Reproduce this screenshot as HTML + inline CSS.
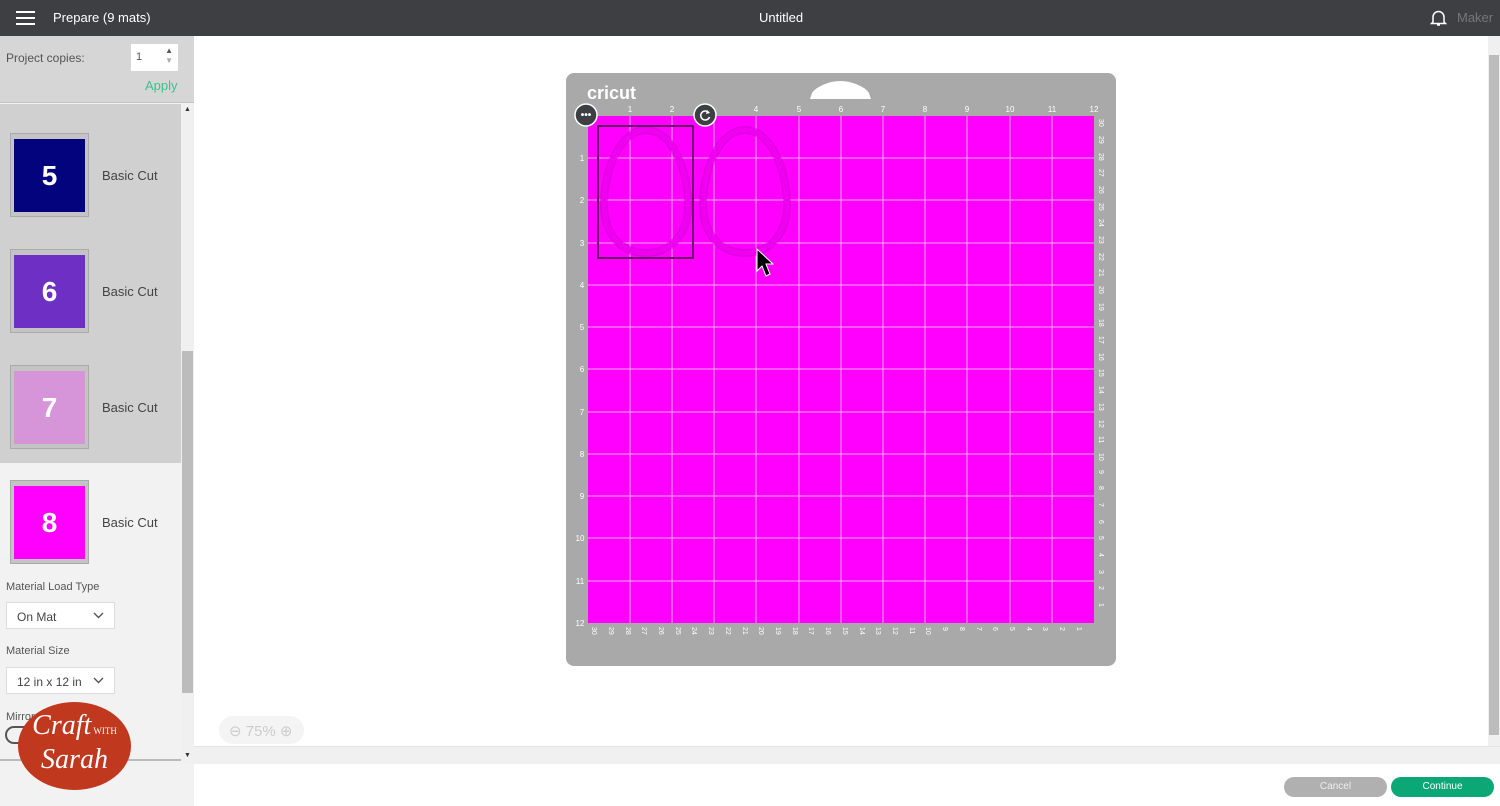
<!DOCTYPE html>
<html><head><meta charset="utf-8"><style>
*{margin:0;padding:0;box-sizing:border-box}
body{width:1500px;height:806px;overflow:hidden;font-family:"Liberation Sans",sans-serif;background:#fff;position:relative}
.top{position:absolute;left:0;top:0;width:1500px;height:36px;background:#3d3f43;color:#fff}
.abs{position:absolute}
.side{position:absolute;left:0;top:36px;width:194px;height:770px;background:#f2f2f2}
.item{position:absolute;left:0;width:181px;height:116px}
.thumb{position:absolute;left:10px;top:14px;width:79px;height:84px;background:#c4c4c4;border:1px solid #aaa}
.thumb div{position:absolute;left:3px;top:5px;width:71px;height:73px;color:#fff;font-size:28px;font-weight:bold;text-align:center;line-height:73px}
.lbl{position:absolute;left:102px;top:49px;font-size:13px;color:#444}
.sel{position:absolute;left:6px;width:109px;height:27px;background:#fff;border:1px solid #ddd;font-size:12px;color:#444;padding:7px 0 0 10px}
.sel svg{position:absolute;right:10px;top:9px}
</style></head><body>
<div class="top">
 <div class="abs" style="left:16px;top:11px;width:19px;height:2px;background:#fff;box-shadow:0 6px 0 #fff,0 12px 0 #fff"></div>
 <div class="abs" style="left:53px;top:10px;font-size:13px">Prepare (9 mats)</div>
 <div class="abs" style="left:759px;top:10px;font-size:13px">Untitled</div>
 <svg class="abs" style="left:1430px;top:9px" width="17" height="18" viewBox="0 0 17 18"><path d="M3 13V8a5.5 5.5 0 0 1 11 0v5l1.5 1.5h-14z M7 16h3" fill="none" stroke="#fff" stroke-width="1.5"/></svg>
 <div class="abs" style="left:1457px;top:10px;font-size:13px;color:#777">Maker</div>
</div>
<div class="side">
 <div class="abs" style="left:0;top:0;width:194px;height:67px;background:#d6d6d6;border-bottom:1px solid #c4c4c4"></div>
 <div class="abs" style="left:6px;top:15px;font-size:12px;color:#555">Project copies:</div>
 <div class="abs" style="left:131px;top:8px;width:47px;height:27px;background:#fff;font-size:11px;color:#555;padding:7px 0 0 5px">1<span style="position:absolute;right:5px;top:2px;font-size:8px;line-height:10px">▲<br><span style="color:#aaa">▼</span></span></div>
 <div class="abs" style="left:145px;top:42px;font-size:13px;color:#3fbf8f">Apply</div>
 <div class="abs" style="left:0;top:68px;width:181px;height:359px;background:#d0d0d0"></div>
 <div class="abs" style="left:181px;top:68px;width:13px;height:660px;background:#f0f0f0"></div>
 <div class="abs" style="left:182px;top:315px;width:11px;height:342px;background:#bcbcbc"></div>
 <div class="abs" style="left:184px;top:70px;font-size:7px;color:#333">▲</div>
 <div class="abs" style="left:184px;top:716px;font-size:7px;color:#333">▼</div>
 <div class="item" style="top:83px"><div class="thumb"><div style="background:#03037e">5</div></div><div class="lbl">Basic Cut</div></div>
 <div class="item" style="top:199px"><div class="thumb"><div style="background:#6e2fc4">6</div></div><div class="lbl">Basic Cut</div></div>
 <div class="item" style="top:315px"><div class="thumb"><div style="background:#d695d8">7</div></div><div class="lbl">Basic Cut</div></div>
 <div class="item" style="top:430px"><div class="thumb"><div style="background:#ff00ff">8</div></div><div class="lbl">Basic Cut</div></div>
 <div class="abs" style="left:6px;top:545px;font-size:11px;color:#555">Material Load Type</div>
 <div class="sel" style="top:566px">On Mat<svg width="11" height="7"><path d="M1 1l4.5 4.5L10 1" fill="none" stroke="#555" stroke-width="1.4"/></svg></div>
 <div class="abs" style="left:6px;top:609px;font-size:11px;color:#555">Material Size</div>
 <div class="sel" style="top:631px">12 in x 12 in<svg width="11" height="7"><path d="M1 1l4.5 4.5L10 1" fill="none" stroke="#555" stroke-width="1.4"/></svg></div>
 <div class="abs" style="left:6px;top:675px;font-size:11px;color:#555">Mirror</div>
 <div class="abs" style="left:5px;top:690px;width:30px;height:18px;border:2px solid #555;border-radius:9px"></div>
 <div class="abs" style="left:0;top:723px;width:181px;height:2px;background:#bbb"></div>
 <div class="abs" style="left:18px;top:666px;width:113px;height:88px;border-radius:50%;background:#c0381d;color:#fff;font-family:'Liberation Serif',serif;font-style:italic;text-align:center">
  <div style="font-size:28px;margin-top:10px;line-height:28px">Craft<span style="font-size:9px;font-style:normal"> WITH</span></div>
  <div style="font-size:28px;line-height:30px">Sarah</div>
 </div>
</div>
<div class="abs" style="left:1488px;top:36px;width:12px;height:710px;background:#f0f0f0"></div>
<div class="abs" style="left:1489px;top:55px;width:10px;height:680px;background:#bcbcbc"></div>
<div class="abs" style="left:194px;top:746px;width:1306px;height:18px;background:#f0f0f0;border-top:1px solid #e4e4e4"></div>
<div class="abs" style="left:219px;top:716px;width:85px;height:28px;border-radius:14px;background:#f4f4f4;color:#ccc;font-size:15px;padding:6px 0 0 10px">⊖ 75% ⊕</div>
<div class="abs" style="left:1284px;top:777px;width:103px;height:20px;border-radius:10px;background:#b0b0b0;color:#eee;font-size:10px;text-align:center;line-height:20px">Cancel</div>
<div class="abs" style="left:1391px;top:777px;width:103px;height:20px;border-radius:10px;background:#0ba775;color:#fff;font-size:10px;text-align:center;line-height:20px">Continue</div>
<svg class="abs" style="left:0;top:0" width="1500" height="806" font-family="Liberation Sans" pointer-events="none">
 <rect x="566" y="73" width="550" height="593" rx="8" fill="#a9a9a9"/>
 <path d="M810 99 L812 93 Q815 88 825 84 Q840 78 856 84 Q866 88 869 93 L871 99 Z" fill="#fff"/>
 <text x="587" y="99" font-size="18" font-weight="bold" fill="#fff">cricut</text>
 <rect x="588" y="116" width="506" height="507" fill="#ff00ff"/>
 <g stroke="#ffa8ff" stroke-width="1">
  <line x1="630" y1="116" x2="630" y2="623"/><line x1="672" y1="116" x2="672" y2="623"/><line x1="714" y1="116" x2="714" y2="623"/><line x1="756" y1="116" x2="756" y2="623"/><line x1="799" y1="116" x2="799" y2="623"/><line x1="841" y1="116" x2="841" y2="623"/><line x1="883" y1="116" x2="883" y2="623"/><line x1="925" y1="116" x2="925" y2="623"/><line x1="967" y1="116" x2="967" y2="623"/><line x1="1010" y1="116" x2="1010" y2="623"/><line x1="1052" y1="116" x2="1052" y2="623"/>
  <line x1="588" y1="158" x2="1094" y2="158"/><line x1="588" y1="200" x2="1094" y2="200"/><line x1="588" y1="243" x2="1094" y2="243"/><line x1="588" y1="285" x2="1094" y2="285"/><line x1="588" y1="327" x2="1094" y2="327"/><line x1="588" y1="369" x2="1094" y2="369"/><line x1="588" y1="412" x2="1094" y2="412"/><line x1="588" y1="454" x2="1094" y2="454"/><line x1="588" y1="496" x2="1094" y2="496"/><line x1="588" y1="538" x2="1094" y2="538"/><line x1="588" y1="581" x2="1094" y2="581"/>
 </g>
 <g fill="none">
  <path stroke="#c800c8" stroke-width="8" opacity="0.55" d="M646 130 C620 130 604 170 604 205 C604 235 622 253 646 253 C670 253 688 235 688 205 C688 170 672 130 646 130Z"/>
  <path stroke="#f000f0" stroke-width="5" d="M646 130 C620 130 604 170 604 205 C604 235 622 253 646 253 C670 253 688 235 688 205 C688 170 672 130 646 130Z"/>
  <path stroke="#c800c8" stroke-width="8" opacity="0.55" d="M745 130 C719 130 703 170 703 205 C703 235 721 253 745 253 C769 253 787 235 787 205 C787 170 771 130 745 130Z"/>
  <path stroke="#f000f0" stroke-width="5" d="M745 130 C719 130 703 170 703 205 C703 235 721 253 745 253 C769 253 787 235 787 205 C787 170 771 130 745 130Z"/>
 </g>
 <rect x="598" y="126" width="95" height="132" fill="none" stroke="#3a003a" stroke-width="1.5"/>
 <circle cx="586" cy="115" r="11" fill="#3d3f43" stroke="#fff" stroke-width="1.5"/>
 <text x="586" y="118" font-size="10" fill="#fff" text-anchor="middle" font-weight="bold">•••</text>
 <circle cx="705" cy="115" r="11" fill="#3d3f43" stroke="#fff" stroke-width="1.5"/>
 <path d="M709 113 A4.5 4.5 0 1 0 709.5 117" fill="none" stroke="#fff" stroke-width="1.5"/><path d="M707 110 L710 113 L706 114Z" fill="#fff"/>
 <path d="M757 249 L757 271 L762 266 L766 276 L770 274 L766 264 L773 264 Z" fill="#000" stroke="#fff" stroke-width="1"/>
 <g font-size="8" fill="#fff" text-anchor="middle">
  <text x="630" y="112">1</text><text x="672" y="112">2</text><text x="756" y="112">4</text><text x="799" y="112">5</text><text x="841" y="112">6</text><text x="883" y="112">7</text><text x="925" y="112">8</text><text x="967" y="112">9</text><text x="1010" y="112">10</text><text x="1052" y="112">11</text><text x="1094" y="112">12</text>
  <text x="582" y="161">1</text><text x="582" y="203">2</text><text x="582" y="246">3</text><text x="582" y="288">4</text><text x="582" y="330">5</text><text x="582" y="372">6</text><text x="582" y="415">7</text><text x="582" y="457">8</text><text x="582" y="499">9</text><text x="580" y="541">10</text><text x="580" y="584">11</text><text x="580" y="626">12</text>
 </g>
 <g font-size="7" fill="#fff">
  <text transform="translate(592,627) rotate(90)">30</text><text transform="translate(609,627) rotate(90)">29</text><text transform="translate(626,627) rotate(90)">28</text><text transform="translate(642,627) rotate(90)">27</text><text transform="translate(659,627) rotate(90)">26</text><text transform="translate(676,627) rotate(90)">25</text><text transform="translate(692,627) rotate(90)">24</text><text transform="translate(709,627) rotate(90)">23</text><text transform="translate(726,627) rotate(90)">22</text><text transform="translate(743,627) rotate(90)">21</text><text transform="translate(759,627) rotate(90)">20</text><text transform="translate(776,627) rotate(90)">19</text><text transform="translate(793,627) rotate(90)">18</text><text transform="translate(809,627) rotate(90)">17</text><text transform="translate(826,627) rotate(90)">16</text><text transform="translate(843,627) rotate(90)">15</text><text transform="translate(860,627) rotate(90)">14</text><text transform="translate(876,627) rotate(90)">13</text><text transform="translate(893,627) rotate(90)">12</text><text transform="translate(910,627) rotate(90)">11</text><text transform="translate(926,627) rotate(90)">10</text><text transform="translate(943,627) rotate(90)">9</text><text transform="translate(960,627) rotate(90)">8</text><text transform="translate(977,627) rotate(90)">7</text><text transform="translate(993,627) rotate(90)">6</text><text transform="translate(1010,627) rotate(90)">5</text><text transform="translate(1027,627) rotate(90)">4</text><text transform="translate(1043,627) rotate(90)">3</text><text transform="translate(1060,627) rotate(90)">2</text><text transform="translate(1077,627) rotate(90)">1</text>
  <text transform="translate(1099,119) rotate(90)">30</text><text transform="translate(1099,136) rotate(90)">29</text><text transform="translate(1099,153) rotate(90)">28</text><text transform="translate(1099,169) rotate(90)">27</text><text transform="translate(1099,186) rotate(90)">26</text><text transform="translate(1099,203) rotate(90)">25</text><text transform="translate(1099,219) rotate(90)">24</text><text transform="translate(1099,236) rotate(90)">23</text><text transform="translate(1099,253) rotate(90)">22</text><text transform="translate(1099,269) rotate(90)">21</text><text transform="translate(1099,286) rotate(90)">20</text><text transform="translate(1099,303) rotate(90)">19</text><text transform="translate(1099,319) rotate(90)">18</text><text transform="translate(1099,336) rotate(90)">17</text><text transform="translate(1099,353) rotate(90)">16</text><text transform="translate(1099,369) rotate(90)">15</text><text transform="translate(1099,386) rotate(90)">14</text><text transform="translate(1099,403) rotate(90)">13</text><text transform="translate(1099,420) rotate(90)">12</text><text transform="translate(1099,436) rotate(90)">11</text><text transform="translate(1099,453) rotate(90)">10</text><text transform="translate(1099,470) rotate(90)">9</text><text transform="translate(1099,486) rotate(90)">8</text><text transform="translate(1099,503) rotate(90)">7</text><text transform="translate(1099,520) rotate(90)">6</text><text transform="translate(1099,536) rotate(90)">5</text><text transform="translate(1099,553) rotate(90)">4</text><text transform="translate(1099,570) rotate(90)">3</text><text transform="translate(1099,586) rotate(90)">2</text><text transform="translate(1099,603) rotate(90)">1</text>
 </g>
</svg>
</body></html>
